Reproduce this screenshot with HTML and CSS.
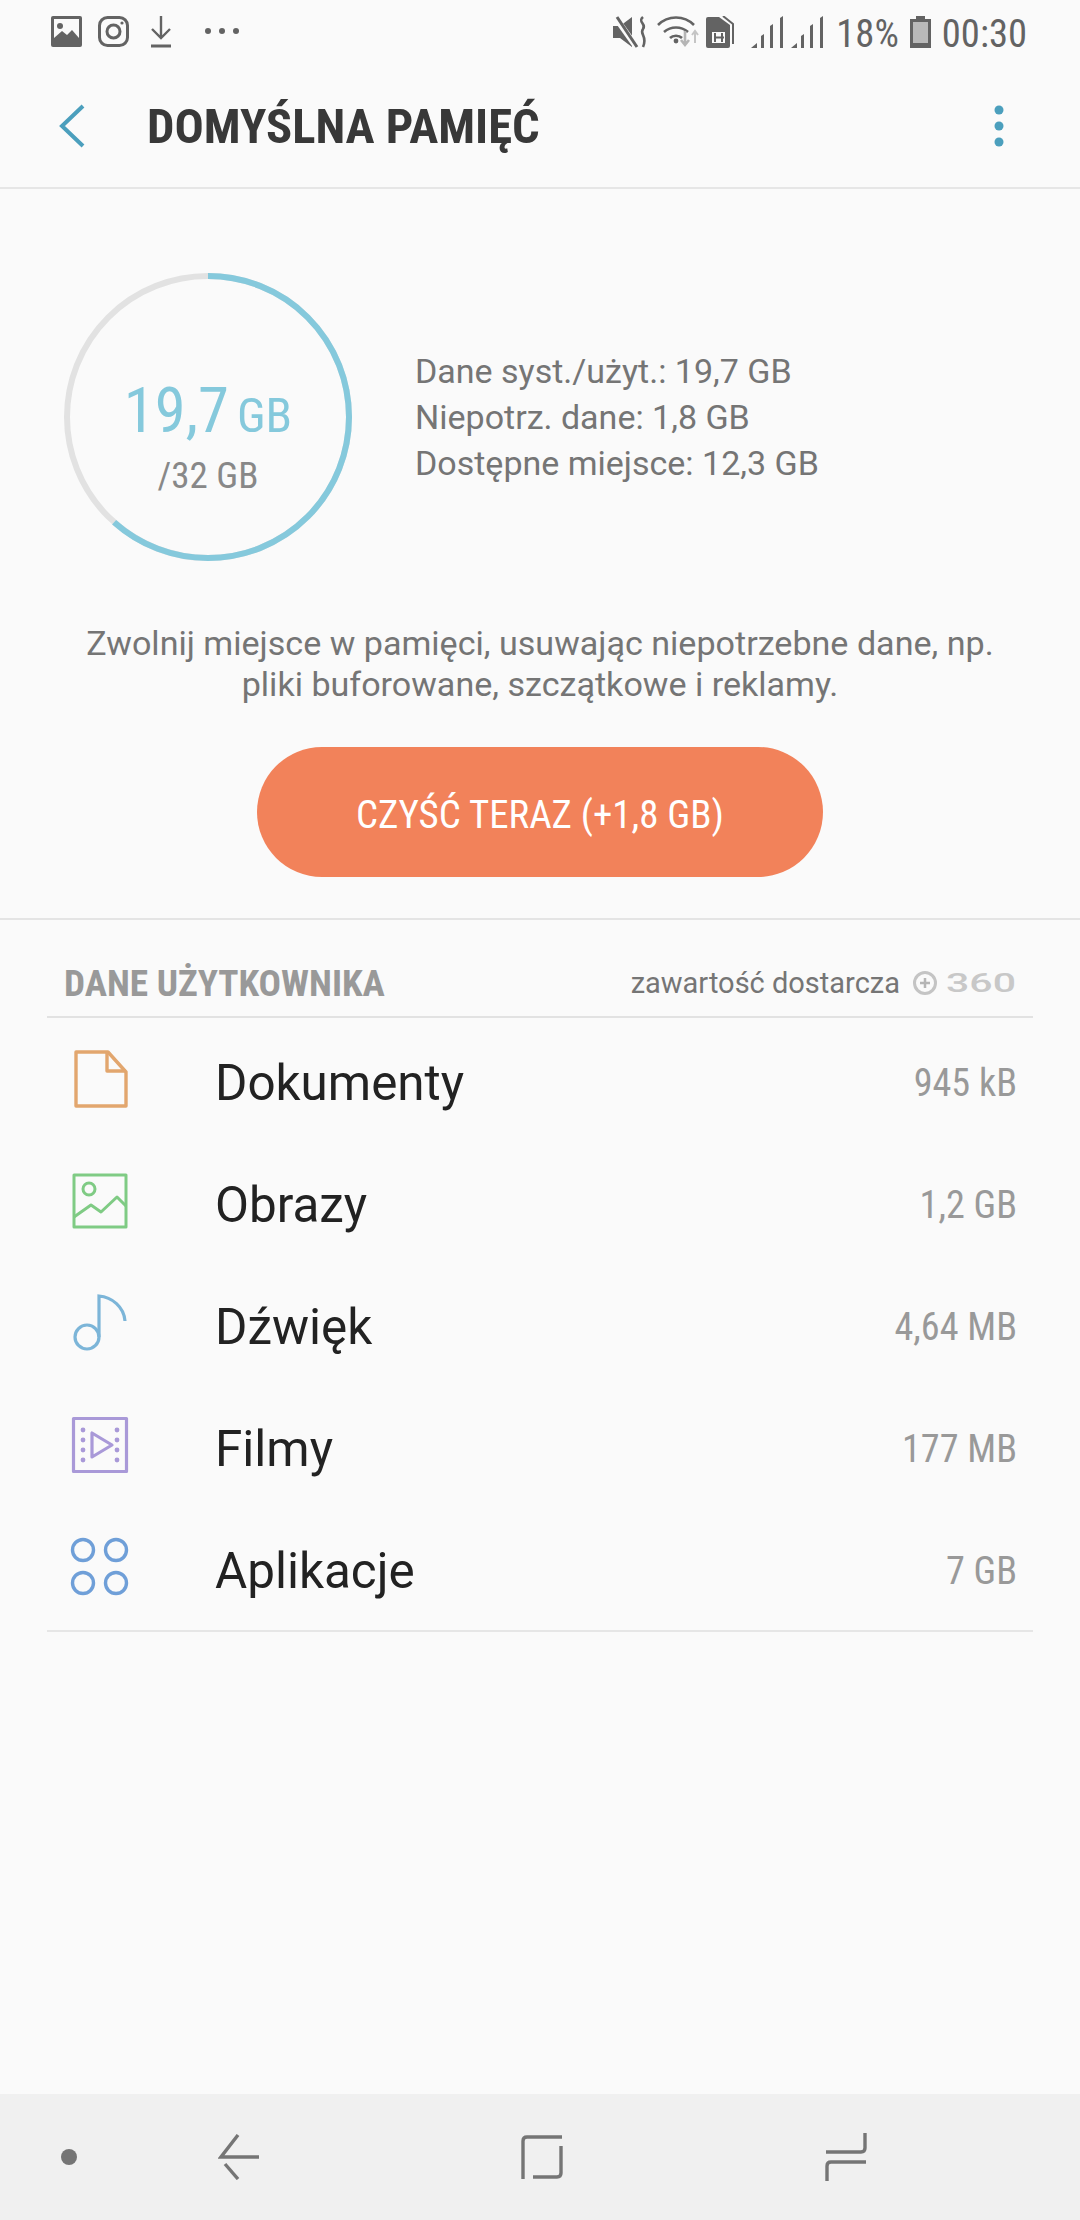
FILE: index.html
```html
<!DOCTYPE html>
<html lang="pl">
<head>
  <meta charset="UTF-8">
  <title>Domyślna pamięć</title>
  <link rel="stylesheet" href="styles.css">
</head>
<body>

<div class="phone">
  <div class="statusbar">
    <div class="status-left">
      <svg class="ic-pic" viewBox="0 0 31 31"><rect width="31" height="31" rx="2" fill="#636363"/><path d="M3 3h25v19l-7-8-5 5-5-4-8 7z" fill="#fafafa"/><circle cx="9" cy="10" r="3" fill="#636363"/></svg>
      <svg class="ic-insta" viewBox="0 0 31 31" fill="none" stroke="#636363" stroke-width="3"><rect x="1.5" y="1.5" width="28" height="28" rx="8"/><circle cx="15.5" cy="15.5" r="6.5"/><circle cx="24" cy="7" r="1.6" fill="#636363" stroke="none"/></svg>
      <svg class="ic-down" viewBox="0 0 22 32" fill="none" stroke="#636363" stroke-width="2.4"><path d="M11 0v22M2 13l9 9 9-9"/><path d="M1 30h20" stroke-width="3"/></svg>
      <svg class="ic-dots" viewBox="0 0 34 6" fill="#636363"><circle cx="3" cy="3" r="3"/><circle cx="17" cy="3" r="3"/><circle cx="31" cy="3" r="3"/></svg>
    </div>
    <div class="status-right">
      <svg class="ic-mute" viewBox="0 0 36 32" fill="#636363"><path d="M0 10h7L19 1v30L7 22H0z"/><path d="M2 1l20 28" stroke="#fafafa" stroke-width="6"/><path d="M4 1l20 30" stroke="#636363" stroke-width="3"/><path d="M30 1c-6 5 4 7 0 12-4 5 5 7 0 18" fill="none" stroke="#636363" stroke-width="2.6"/></svg>
      <svg class="ic-wifi" viewBox="0 0 42 32" fill="none" stroke="#636363" stroke-width="2.6"><path d="M1 9c10-10 26-10 36 0M7 16c7-6 17-6 24 0M13 22c3-3 9-3 12 0"/><circle cx="19" cy="25" r="2.4" fill="#636363" stroke="none"/><path d="M28 15v13M24 24l4 5 4-5" stroke="#b5b5b5"/><path d="M38 27V15M35 19l3-4 3 4" stroke="#c5c5c5" stroke-width="2"/></svg>
      <svg class="ic-sim" viewBox="0 0 28 32"><path d="M0 3a2 2 0 0 1 2-2h11l11 8v21a2 2 0 0 1-2 2H2a2 2 0 0 1-2-2z" fill="#636363"/><path d="M17 0l10 8v20" fill="none" stroke="#636363" stroke-width="2"/><rect x="6" y="16" width="13" height="11" fill="#fafafa"/><path d="M9 17v9M16 17v9M8 21.500h10" stroke="#636363" stroke-width="2"/></svg>
      <svg class="ic-signal ic-signal-first" viewBox="0 0 32 32" fill="#636363"><path d="M0 32l6-5v5z"/><path d="M10 32V20l3-2v14z"/><path d="M19 32V10l3-2v24z"/><path d="M29 32V2l3-2v32z"/></svg>
      <svg class="ic-signal" viewBox="0 0 32 32" fill="#636363"><path d="M0 32l6-5v5z"/><path d="M10 32V20l3-2v14z"/><path d="M19 32V10l3-2v24z"/><path d="M29 32V2l3-2v32z"/></svg>
      <span class="status-text">18%</span>
      <svg class="ic-batt" viewBox="0 0 21 32"><path d="M6 0h9v3h6v29H0V3h6z" fill="#636363"/><rect x="3" y="6" width="15" height="21" fill="#b9b9b9"/></svg>
      <span class="status-text status-time">00:30</span>
    </div>
  </div>

  <div class="toolbar">
    <svg class="ic-back" viewBox="0 0 26 44" fill="none" stroke="#4b9fbd" stroke-width="4"><path d="M24 2L3 22l21 20"/></svg>
    <h1 class="title">DOMYŚLNA PAMIĘĆ</h1>
    <svg class="ic-more" viewBox="0 0 10 42" fill="#4b9fbd"><circle cx="5" cy="5" r="4.5"/><circle cx="5" cy="21" r="4.5"/><circle cx="5" cy="37" r="4.5"/></svg>
  </div>

  <div class="summary">
    <div class="donut">
      <svg class="donut-ring" viewBox="0 0 300 300" fill="none" stroke-width="6">
        <circle cx="150" cy="150" r="141" stroke="#e2e2e2"/>
        <circle cx="150" cy="150" r="141" stroke="#85c9dc" pathLength="100" stroke-dasharray="61.6 100" transform="rotate(-90 150 150)"/>
      </svg>
      <div class="donut-label">
        <div class="used"><span class="used-num">19,7</span><span class="used-unit">GB</span></div>
        <div class="total">/32 GB</div>
      </div>
    </div>
    <div class="legend">
      <div>Dane syst./użyt.: 19,7 GB</div>
      <div>Niepotrz. dane: 1,8 GB</div>
      <div>Dostępne miejsce: 12,3 GB</div>
    </div>
  </div>

  <p class="hint">Zwolnij miejsce w pamięci, usuwając niepotrzebne dane, np.<br>pliki buforowane, szczątkowe i reklamy.</p>

  <div class="action">
    <button class="clean">CZYŚĆ TERAZ (+1,8 GB)</button>
  </div>

  <div class="section-head">
    <span class="section-title">DANE UŻYTKOWNIKA</span>
    <span class="provider">zawartość dostarcza</span>
    <svg class="logo360" viewBox="0 0 104 34">
      <circle cx="12" cy="17" r="10.5" fill="none" stroke="#c4c4c4" stroke-width="3"/>
      <path d="M12 12v10M7 17h10" stroke="#b5b5b5" stroke-width="2.5"/>
      <text x="33" y="26" textLength="70" lengthAdjust="spacingAndGlyphs" class="logo-text">360</text>
    </svg>
  </div>

  <div class="list">
    <div class="row">
      <svg class="row-icon" viewBox="0 0 60 60" fill="none" stroke="#e2a66e" stroke-width="3.4" stroke-linejoin="round"><path d="M6 3h32l18 20v34H6z"/><path d="M37 3v19h19"/></svg>
      <span class="row-name">Dokumenty</span>
      <span class="row-size">945 kB</span>
    </div>
    <div class="row">
      <svg class="row-icon" viewBox="0 0 60 60" fill="none" stroke="#7fcb84" stroke-width="3" stroke-linejoin="round"><rect x="4" y="4" width="52" height="52"/><circle cx="19" cy="18" r="6"/><path d="M4 46l17-12 10 7 16-15 9 9"/></svg>
      <span class="row-name">Obrazy</span>
      <span class="row-size">1,2 GB</span>
    </div>
    <div class="row">
      <svg class="row-icon" viewBox="0 0 60 60" fill="none" stroke="#7cb5d8" stroke-width="3.2"><circle cx="17" cy="44" r="12"/><path d="M29 44V3c13 1 25 11 26 25"/></svg>
      <span class="row-name">Dźwięk</span>
      <span class="row-size">4,64 MB</span>
    </div>
    <div class="row">
      <svg class="row-icon" viewBox="0 0 60 60" fill="none" stroke="#a999d8" stroke-width="3.2" stroke-linejoin="round"><rect x="3.5" y="3.5" width="53" height="53"/><path d="M22 18v24l20-12z"/><g fill="#a999d8" stroke="none"><circle cx="13" cy="15" r="2.4"/><circle cx="13" cy="25" r="2.4"/><circle cx="13" cy="35" r="2.4"/><circle cx="13" cy="45" r="2.4"/><circle cx="47" cy="15" r="2.4"/><circle cx="47" cy="25" r="2.4"/><circle cx="47" cy="35" r="2.4"/><circle cx="47" cy="45" r="2.4"/></g></svg>
      <span class="row-name">Filmy</span>
      <span class="row-size">177 MB</span>
    </div>
    <div class="row">
      <svg class="row-icon" viewBox="0 0 60 60" fill="none" stroke="#6f9fd8" stroke-width="3.4"><circle cx="13" cy="13" r="10.5"/><circle cx="46" cy="13" r="10.5"/><circle cx="13" cy="46" r="10.5"/><circle cx="46" cy="46" r="10.5"/></svg>
      <span class="row-name">Aplikacje</span>
      <span class="row-size">7 GB</span>
    </div>
  </div>

  <div class="spacer"></div>

  <div class="navbar">
    <svg class="nav-dot" viewBox="0 0 16 16"><circle cx="8" cy="8" r="8" fill="#757575"/></svg>
    <svg class="nav-back" viewBox="0 0 42 46" fill="none" stroke="#757575" stroke-width="3.4"><path d="M20 1L3 23h38"/><path d="M7 30l13 15"/></svg>
    <svg class="nav-home" viewBox="0 0 42 46" fill="none" stroke="#757575" stroke-width="3.4"><path d="M41 3H6Q2 3 2 7v38"/><path d="M40 12v27q0 4-4 4H12"/></svg>
    <svg class="nav-recent" viewBox="0 0 42 48" fill="none" stroke="#757575" stroke-width="3.4"><path d="M40 0v15q0 4-4 4H1"/><path d="M41 29H6q-4 0-4 4v15"/></svg>
  </div>
</div>

</body>
</html>
```

FILE: styles.css
```css
html, body { margin: 0; padding: 0; }
body { font-family: Roboto, "Noto Sans", sans-serif; background-color: #fafafa; }
svg { display: block; flex: none; }

.phone { width: 1080px; height: 2220px; display: flex; flex-direction: column; overflow: hidden; background-color: #fafafa; }

/* status bar */
.statusbar { height: 64px; display: flex; justify-content: space-between; padding: 16px 53px 0 51px; box-sizing: border-box; }
.status-left { display: flex; align-items: flex-start; }
.status-right { display: flex; align-items: flex-start; }
.ic-pic { width: 31px; height: 31px; }
.ic-insta { width: 31px; height: 31px; margin-left: 16px; }
.ic-down { width: 22px; height: 32px; margin-left: 21px; }
.ic-dots { width: 34px; height: 6px; margin: 12px 0 0 33px; }
.ic-mute { width: 36px; height: 32px; }
.ic-wifi { width: 42px; height: 32px; margin-left: 8px; }
.ic-sim { width: 28px; height: 32px; margin-left: 7px; }
.ic-signal { width: 32px; height: 32px; margin-left: 8px; }
.ic-signal-first { margin-left: 17px; }
.ic-batt { width: 21px; height: 32px; margin-left: 11px; }
.status-text { font-size: 38.6px; line-height: 32px; padding-top: 2px; color: #636363; font-stretch: 75%; margin-left: 13px; }
.status-time { margin-left: 11px; }

/* toolbar */
.toolbar { height: 123px; display: flex; align-items: center; border-bottom: 2px solid #e6e6e6; }
.ic-back { width: 26px; height: 44px; margin-left: 59px; }
.title { flex: 1; margin: 0 0 0 62px; padding-top: 2px; font-size: 48.6px; font-weight: 700; color: #383838; font-stretch: 75%; }
.ic-more { width: 10px; height: 42px; margin-right: 76px; }

/* summary */
.summary { display: flex; align-items: center; padding: 78px 0 0 58px; }
.donut { display: grid; width: 300px; height: 300px; }
.donut-ring { grid-area: 1 / 1; width: 300px; height: 300px; }
.donut-label { grid-area: 1 / 1; display: flex; flex-direction: column; align-items: center; justify-content: center; padding-top: 36px; }
.used { display: flex; align-items: baseline; color: #85c9dc; font-stretch: 75%; }
.used-num { font-size: 62.6px; }
.used-unit { font-size: 48.6px; margin-left: 8px; }
.total { font-size: 37px; color: #888; font-stretch: 75%; margin-top: 7px; }
.legend { margin-left: 57px; font-size: 34px; line-height: 46px; color: #757575; }

.hint { margin: 56px 0 0; font-size: 34.1px; line-height: 41px; color: #757575; text-align: center; }

.action { display: flex; justify-content: center; padding: 42px 0 41px; border-bottom: 2px solid #e4e4e4; }
.clean { width: 566px; height: 130px; padding: 4px 0 0; border: none; border-radius: 65px; background-color: #f2825a; color: #fff; font-family: inherit; font-size: 38.9px; font-stretch: 75%; }

/* section header */
.section-head { display: flex; align-items: center; height: 98px; margin: 0 47px; padding: 30px 16px 0 17px; box-sizing: border-box; border-bottom: 2px solid #e2e2e2; }
.section-title { flex: 1; font-size: 37.3px; font-weight: 700; color: #999; font-stretch: 75%; }
.provider { font-size: 29px; color: #757575; }
.logo360 { width: 104px; height: 34px; margin-left: 13px; }
.logo-text { font-family: Roboto, sans-serif; font-size: 26px; font-weight: 500; fill: #c8c8c8; }

/* rows */
.list { margin: 0 47px; padding-bottom: 2px; border-bottom: 2px solid #e6e6e6; }
.row { height: 122px; display: flex; align-items: center; padding: 0 16px 0 23px; }
.row-icon { width: 60px; height: 60px; }
.row-name { flex: 1; margin-left: 85px; padding-top: 8px; font-size: 49.4px; color: #222; }
.row-size { padding-top: 8px; font-size: 38.2px; color: #999; font-stretch: 75%; }

.spacer { flex: 1; }

/* nav bar */
.navbar { height: 126px; background-color: #f0f0f0; display: flex; align-items: center; padding-left: 61px; }
.nav-dot { width: 16px; height: 16px; }
.nav-back { width: 42px; height: 46px; margin-left: 141px; }
.nav-home { width: 42px; height: 46px; margin-left: 261px; }
.nav-recent { width: 42px; height: 48px; margin-left: 262px; }
```
